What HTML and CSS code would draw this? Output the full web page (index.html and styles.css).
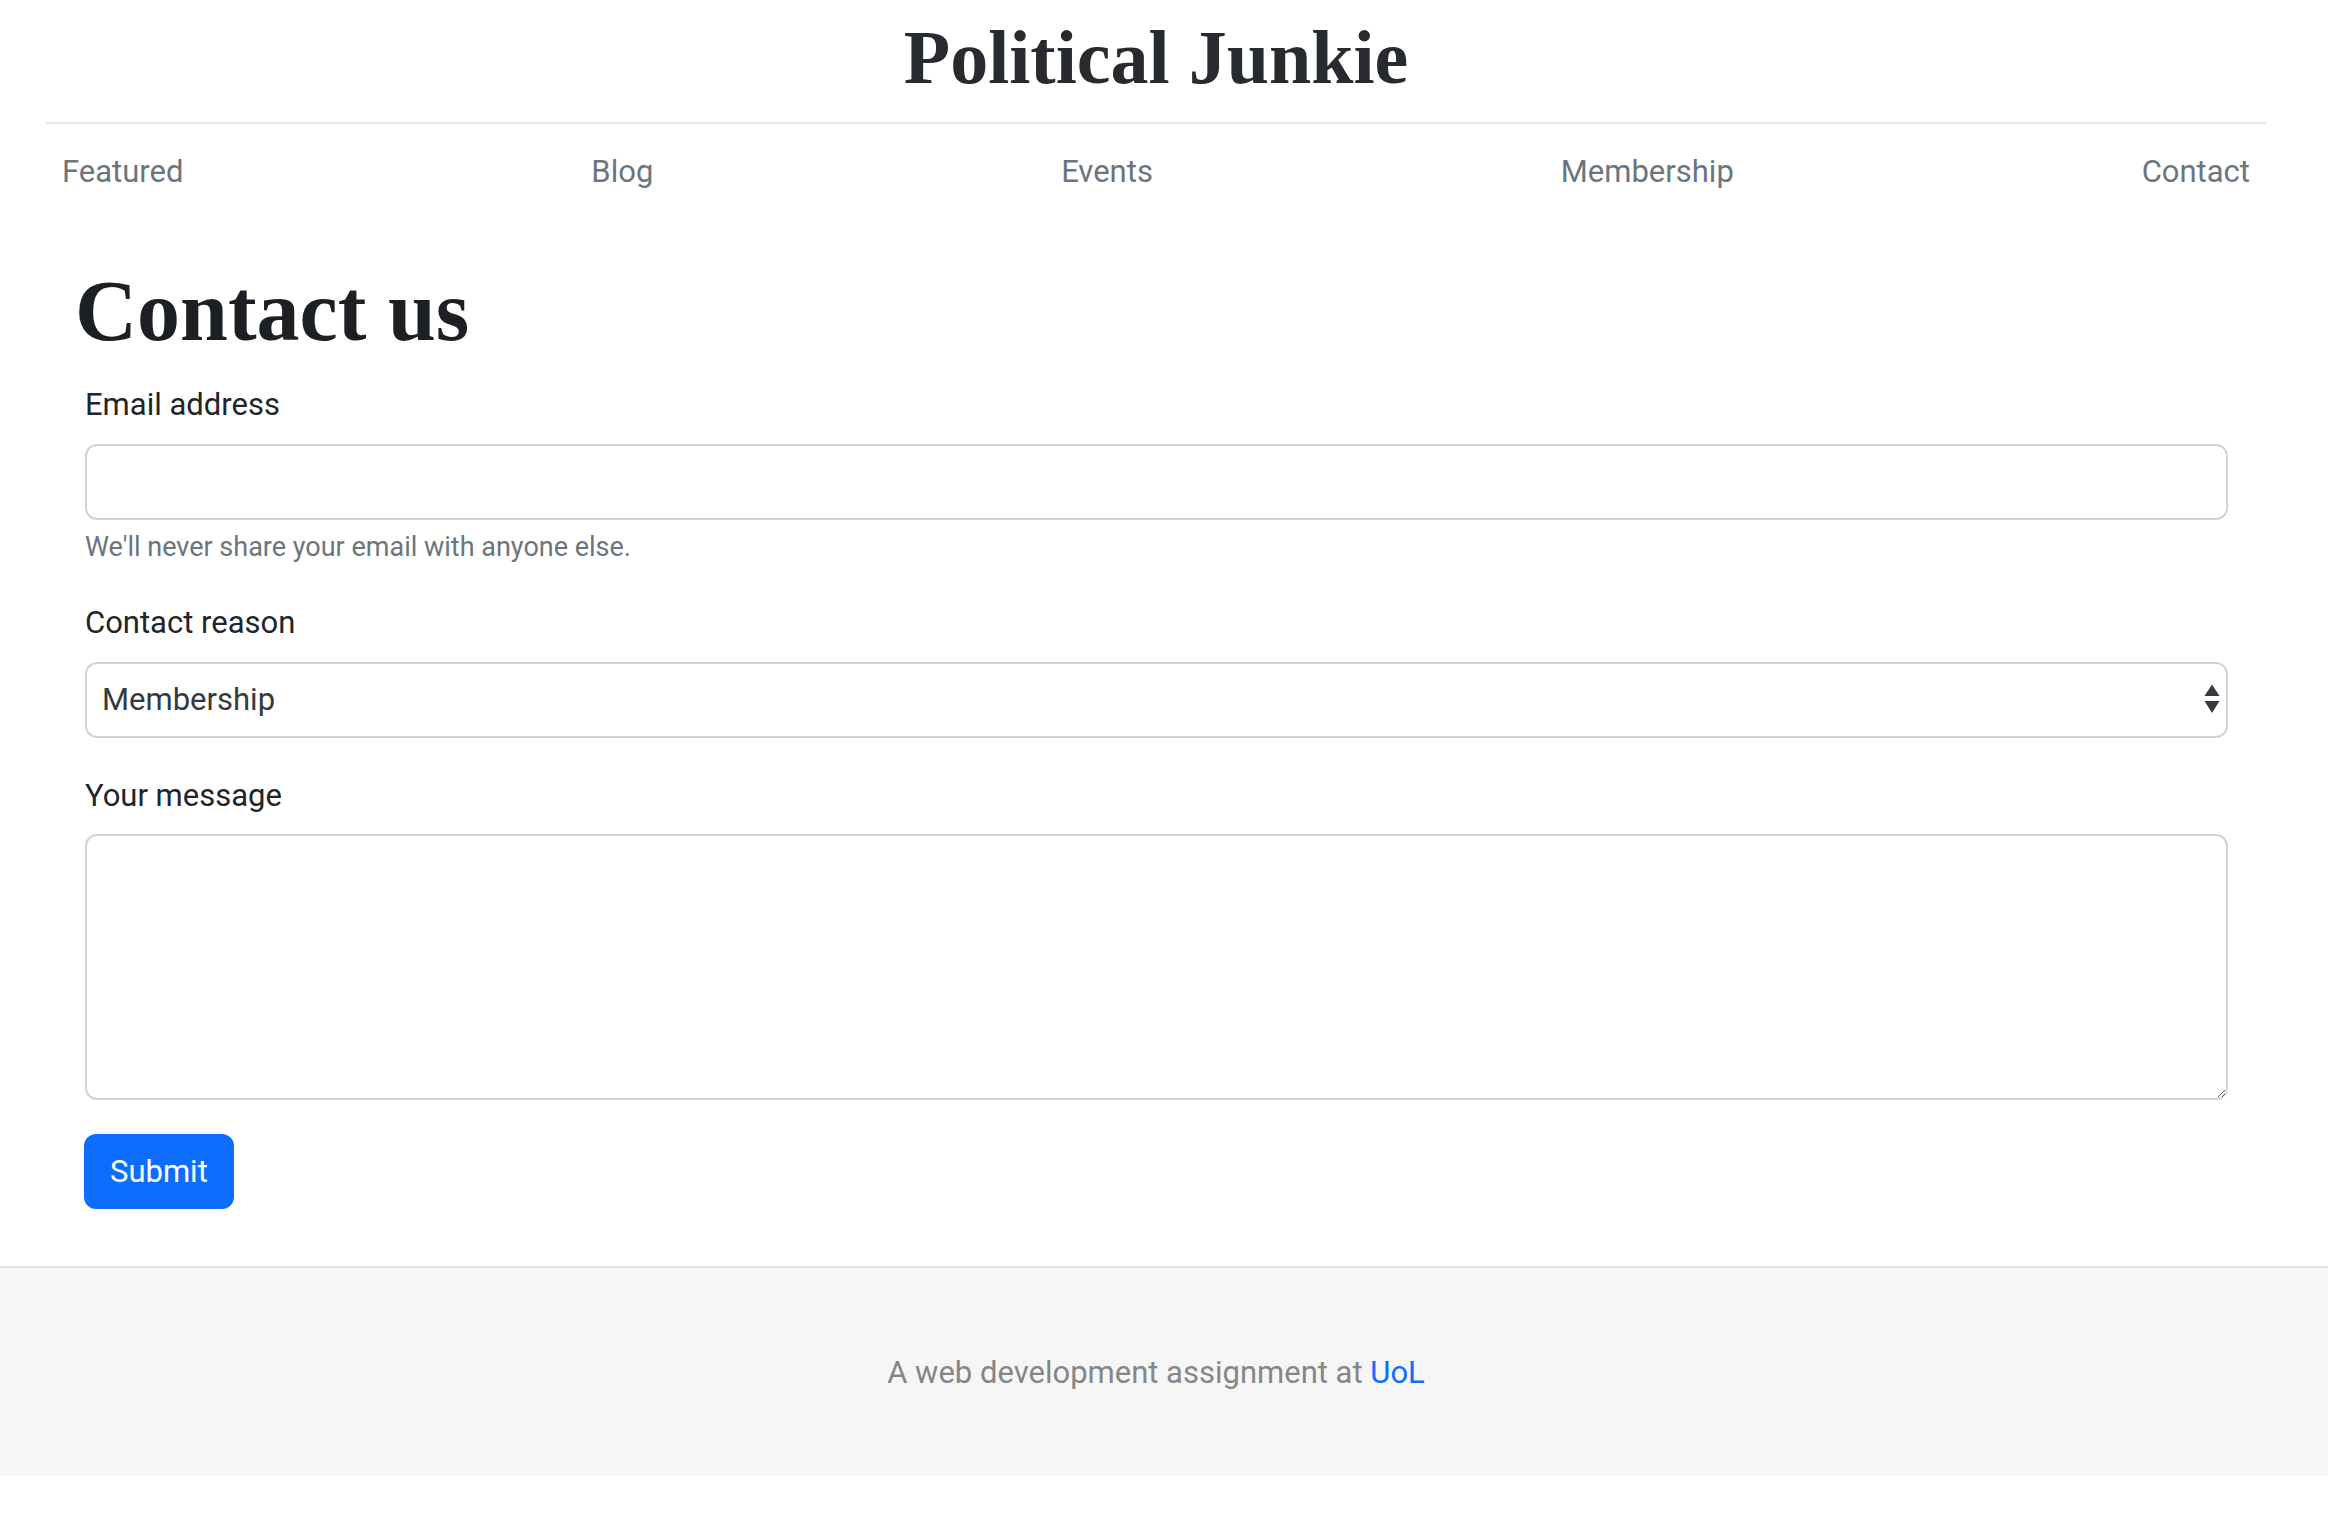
FILE: index.html
```html
<!DOCTYPE html>
<html lang="en">
<head>
<meta charset="utf-8">
<title>Political Junkie - Contact</title>
<link rel="stylesheet" href="styles.css">
</head>
<body>
<div class="container">
  <header class="site-header">
    <a class="logo" href="#">Political Junkie</a>
  </header>
  <nav class="site-nav">
    <a class="nav-link" href="#">Featured</a>
    <a class="nav-link" href="#">Blog</a>
    <a class="nav-link" href="#">Events</a>
    <a class="nav-link" href="#">Membership</a>
    <a class="nav-link" href="#">Contact</a>
  </nav>
  <main class="main">
    <h1 class="page-title">Contact us</h1>
    <form class="contact-form">
      <div class="field field-email">
        <label class="form-label" for="email">Email address</label>
        <input class="form-control form-input" id="email" type="email">
        <div class="form-text">We'll never share your email with anyone else.</div>
      </div>
      <div class="field field-reason">
        <label class="form-label" for="reason">Contact reason</label>
        <div class="select-wrap">
          <select class="form-control form-select" id="reason">
            <option>Membership</option>
            <option>Events</option>
            <option>Blog</option>
            <option>Other</option>
          </select>
          <svg class="select-arrows" viewBox="0 0 16 30" width="16" height="30" aria-hidden="true">
            <polygon points="0.5,12 8,0.5 15.5,12" fill="#343a40"/>
            <polygon points="0.5,17 15.5,17 8,29" fill="#343a40"/>
          </svg>
        </div>
      </div>
      <div class="field field-message">
        <label class="form-label form-label-message" for="message">Your message</label>
        <textarea class="form-control form-textarea" id="message"></textarea>
      </div>
      <button class="btn-submit" type="button">Submit</button>
    </form>
  </main>
</div>
<footer class="site-footer">
  <div class="footer-inner">A web development assignment at <a class="footer-link" href="#">UoL</a></div>
</footer>
</body>
</html>
```

FILE: styles.css
```css
* {
  box-sizing: border-box;
}

html, body {
  margin: 0;
  padding: 0;
  background: #ffffff;
}

body {
  font-family: Roboto, "Liberation Sans", Arial, sans-serif;
  font-size: 31px;
  line-height: 46px;
  color: #212529;
}

.container {
  width: 2220px;
  margin-left: 46px;
}

.site-header {
  padding-top: 12px;
  padding-bottom: 20px;
  border-bottom: 2px solid #e5e5e5;
  text-align: center;
}

.logo {
  font-family: "Liberation Serif", "Times New Roman", serif;
  font-weight: 700;
  font-size: 76px;
  line-height: 90px;
  color: #272b30;
  text-decoration: none;
}

.site-nav {
  display: flex;
  justify-content: space-between;
  padding-top: 9px;
}

.nav-link {
  padding: 16px;
  color: #6c757d;
  text-decoration: none;
  line-height: 46px;
}

.main {
  padding-top: 50px;
}

.page-title {
  margin: 0 0 21px 29px;
  font-family: "Liberation Serif", "Times New Roman", serif;
  font-weight: 700;
  font-size: 86px;
  line-height: 100px;
  color: #1c1f23;
}

.contact-form {
  margin-left: 39px;
  width: 2143px;
  padding-bottom: 57px;
}

.field-email {
  margin-bottom: 33px;
}

.field-reason {
  margin-bottom: 35px;
}

.field-message {
  margin-bottom: 34px;
}

.form-label {
  display: block;
  margin-bottom: 16px;
  line-height: 46px;
  color: #212529;
}

.form-label-message {
  margin-bottom: 15px;
}

.form-control {
  display: block;
  width: 100%;
  border: 2px solid #ced4da;
  border-radius: 12px;
  background: #ffffff;
  font-family: Roboto, "Liberation Sans", Arial, sans-serif;
  font-size: 31px;
  color: #343a40;
  outline: none;
}

.form-input {
  height: 76px;
  padding: 0 15px;
}

.form-text {
  margin-top: 7px;
  font-size: 27px;
  line-height: 40px;
  color: #6c757d;
}

.select-wrap {
  position: relative;
}

.form-select {
  height: 76px;
  padding: 0 60px 0 15px;
  -webkit-appearance: none;
  appearance: none;
  line-height: 46px;
}

.select-arrows {
  position: absolute;
  right: 8px;
  top: 22px;
  pointer-events: none;
}

.form-textarea {
  height: 266px;
  padding: 12px 15px;
  resize: both;
}

.btn-submit {
  display: block;
  height: 75px;
  padding: 0 26px;
  margin-left: -1px;
  border: none;
  border-radius: 12px;
  background: #0d6efd;
  color: #ffffff;
  font-family: Roboto, "Liberation Sans", Arial, sans-serif;
  font-size: 31px;
  line-height: 46px;
  cursor: pointer;
}

.site-footer {
  border-top: 2px solid #e5e5e5;
  background: #f6f6f6;
  padding: 82px 0 80px;
}

.footer-inner {
  width: 2220px;
  margin-left: 46px;
  text-align: center;
  color: #868686;
  line-height: 46px;
}

.footer-link {
  color: #0d6efd;
  text-decoration: none;
}
```
